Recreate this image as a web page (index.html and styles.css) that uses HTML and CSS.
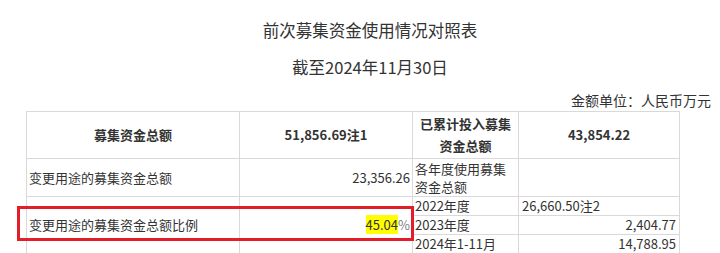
FILE: index.html
```html
<!DOCTYPE html>
<html lang="zh-CN">
<head>
<meta charset="utf-8">
<title>前次募集资金使用情况对照表</title>
<link rel="stylesheet" href="styles.css">
</head>
<body>
<div class="head">
  <h1 class="title">前次募集资金使用情况对照表</h1>
  <p class="subtitle">截至2024年11月30日</p>
  <p class="unit">金额单位：人民币万元</p>
</div>
<div class="wrap">
  <table class="report">
    <colgroup>
      <col class="c1"><col class="c2"><col class="c3"><col class="c4a"><col class="c4b"><col class="c4c">
    </colgroup>
    <tr class="r-head">
      <th>募集资金总额</th>
      <th>51,856.69注1</th>
      <th class="wrap-cell">已累计投入募集资金总额</th>
      <th colspan="3">43,854.22</th>
    </tr>
    <tr class="r-two">
      <td class="left">变更用途的募集资金总额</td>
      <td class="num">23,356.26</td>
      <td class="left wrap-cell">各年度使用募集资金总额</td>
      <td colspan="3"></td>
    </tr>
    <tr class="r-a">
      <td class="left" rowspan="3">变更用途的募集资金总额比例</td>
      <td class="num" rowspan="3"><span class="hl">45.04</span><span class="pct">%</span></td>
      <td class="left">2022年度</td>
      <td class="left" colspan="3">26,660.50注2</td>
    </tr>
    <tr class="r-b">
      <td class="left">2023年度</td>
      <td class="num" colspan="3">2,404.77</td>
    </tr>
    <tr class="r-c">
      <td class="left">2024年1-11月</td>
      <td class="num" colspan="3">14,788.95</td>
    </tr>
    <tr class="r-next">
      <td></td><td></td><td></td><td></td><td></td><td></td>
    </tr>
  </table>
  <div class="mark"></div>
</div>
</body>
</html>
```

FILE: styles.css
```css
html, body {
  margin: 0;
  padding: 0;
  background: #fff;
  overflow: hidden;
}
body {
  font-family: "Noto Sans CJK SC", "Noto Sans", sans-serif;
  color: #333;
  width: 720px;
  height: 253px;
}
.head {
  padding-top: 18px;
}
.title {
  margin: 0;
  padding-left: 20px;
  font-size: 16.5px;
  font-weight: normal;
  line-height: 24px;
  text-align: center;
}
.subtitle {
  margin: 13px 0 0;
  padding-left: 20px;
  font-size: 16.5px;
  line-height: 24px;
  text-align: center;
}
.unit {
  margin: 11px 0 0;
  padding-right: 9px;
  font-size: 14px;
  line-height: 20px;
  text-align: right;
}
.wrap {
  position: relative;
  padding-top: 1px;
}
.report {
  margin-left: 26px;
  width: 653px;
  border-collapse: collapse;
  table-layout: fixed;
  font-size: 13px;
  line-height: 18px;
}
.c1 { width: 213px; }
.c2 { width: 173px; }
.c3 { width: 106px; }
.c4a { width: 54px; }
.c4b { width: 53px; }
.c4c { width: 54px; }
.report th,
.report td {
  border: 1px solid #d9d9d9;
  padding: 0 2px;
  vertical-align: middle;
}
.report th {
  font-weight: bold;
  text-align: center;
  line-height: 22px;
}
.report .left { text-align: left; }
.report .num { text-align: right; }
.report td[colspan="3"].left { padding-left: 3px; }
.report td[colspan="3"].num { padding-right: 3px; }
.r-head { height: 47px; }
.r-two { height: 38px; }
.r-a { height: 17px; }
.r-b { height: 19px; }
.r-c { height: 18px; }
.r-next { height: 20px; }
.hl {
  background: #ffff00;
}
.pct {
  color: #808080;
}
.mark {
  position: absolute;
  left: 17px;
  top: 96px;
  width: 397px;
  height: 35px;
  box-sizing: border-box;
  border: 3px solid #e31e28;
}
```
